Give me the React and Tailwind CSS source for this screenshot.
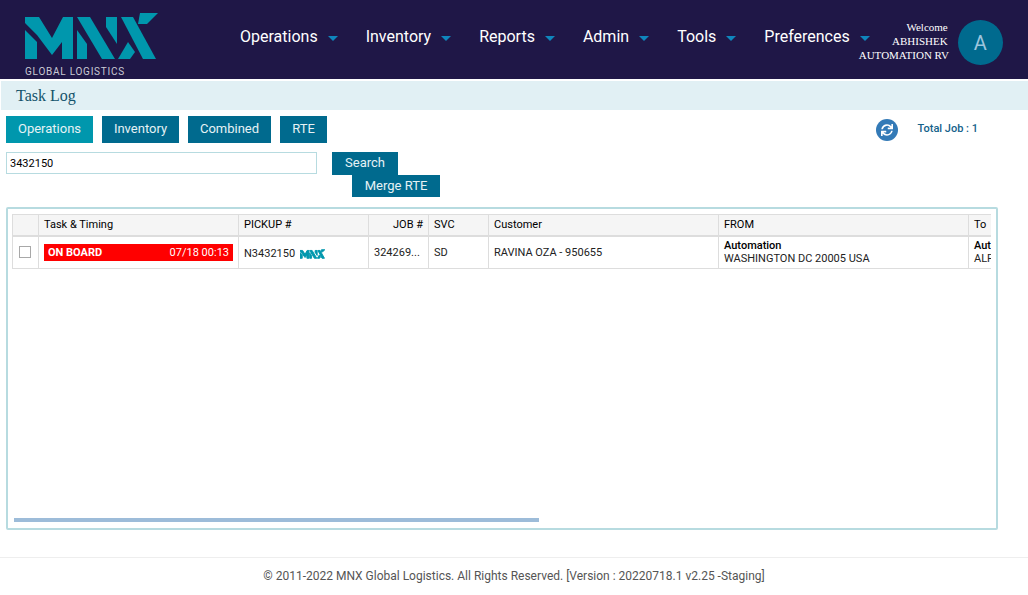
import { FaSync } from 'react-icons/fa';

const navItems = ['Operations', 'Inventory', 'Reports', 'Admin', 'Tools', 'Preferences'];
const tabs = ['Inventory', 'Combined', 'RTE'];

function MnxMark({ className, thick }) {
    return (
        <svg viewBox="0 0 134 46" className={className} fill="#0097ad" stroke={thick ? '#0097ad' : 'none'} strokeWidth={thick ? 5 : 0}>
            <polygon points="0,4 14,4 27,25 38,4 48,4 48,46 37,46 37,29 27,42 12,22 0,10" />
            <polygon points="0,17 12,29 12,46 0,46" />
            <polygon points="52,4 65,4 90,46 77,46" />
            <polygon points="52,17 62,31 62,46 52,46" />
            <polygon points="81,4 92,4 92,31 81,14" />
            <polygon points="96,4 108,4 131,46 118,46" />
            <polygon points="115,0 133,0 122,11 113,11" />
            <polygon points="103,29 110,39 105,46 93,46" />
        </svg>
    );
}

function Header() {
    return (
        <header className="flex h-[79px] items-center bg-[#1f1747] pl-[25px]">
            <div className="w-[215px] self-start pt-[13px]">
                <MnxMark className="h-[46px] w-[134px]" />
                <div className="mt-[7px] text-[10px] leading-[11px] tracking-[0.75px] text-[#c9cad4] font-['Roboto',sans-serif]">GLOBAL LOGISTICS</div>
            </div>
            <nav className="flex gap-[28px] pb-[5px]">
                {navItems.map(item => (
                    <div key={item} className="flex items-center gap-[10px]">
                        <span className="text-base text-white font-['Roboto',sans-serif]">{item}</span>
                        <span className="mt-[2px] h-0 w-0 border-x-[5px] border-t-[5px] border-x-transparent border-t-[#0f86bd]" />
                    </div>
                ))}
            </nav>
            <div className="ml-[-11px] mt-[2px] w-[89px] text-right text-[11px] leading-[14px] text-white font-['Liberation_Serif',serif]">
                <div>Welcome</div>
                <div>ABHISHEK</div>
                <div className="whitespace-nowrap">AUTOMATION RV</div>
            </div>
            <div className="ml-[10px] mt-[6px] flex h-[45px] w-[45px] items-center justify-center rounded-full bg-[#006a8e] text-xl text-[#9ec5dd] font-['Roboto',sans-serif]">A</div>
        </header>
    );
}

function Toolbar() {
    return (
        <>
            <div className="mt-[2px] ml-px h-[29px] bg-[#e1f0f4] pl-[15px] text-base leading-[29px] text-[#14536b] font-['Liberation_Serif',serif]">Task Log</div>
            <div className="mt-[6px] flex h-[27px] pl-[6px] pr-[50px] text-[13px] text-[#e6f2f5]">
                <button className="w-[87px] bg-[#0097ad] pb-[2px]">Operations</button>
                {tabs.map(t => (
                    <button key={t} className={`ml-[9px] bg-[#006a8e] pb-[2px] ${t === 'Inventory' ? 'w-[77px]' : t === 'Combined' ? 'w-[83px]' : 'w-[47px]'}`}>{t}</button>
                ))}
                <div className="ml-auto flex items-center text-[11px] font-medium text-[#14628a]">
                    <span className="flex h-[22px] w-[22px] items-center justify-center rounded-full bg-[#337ab7] text-white"><FaSync size={12} /></span>
                    <span className="ml-[20px] pb-[1px]">Total Job : 1</span>
                </div>
            </div>
            <div className="mt-[9px] flex pl-[6px]">
                <input readOnly value="3432150" className="h-[22px] w-[311px] border border-[#b7dbe0] bg-white px-[3px] text-[11px] text-black outline-none" />
                <div className="ml-[15px] text-[13px] text-[#e6f2f5]">
                    <button className="block h-[23px] w-[66px] bg-[#006a8e] pb-[2px]">Search</button>
                    <button className="ml-[20px] block h-[22px] w-[88px] bg-[#006a8e]">Merge RTE</button>
                </div>
            </div>
        </>
    );
}

function TaskTable() {
    const th = 'border border-[#dddddd] border-b-2 bg-[#f5f5f5] px-[5px] text-left text-[11px] font-normal text-black whitespace-nowrap overflow-hidden';
    const td = 'border border-[#dddddd] px-[5px] text-[11px] text-[#222222] whitespace-nowrap overflow-hidden';
    return (
        <table className="w-[1100px] table-fixed border-collapse">
            <colgroup>
                <col className="w-[26px]" />
                <col className="w-[200px]" />
                <col className="w-[130px]" />
                <col className="w-[60px]" />
                <col className="w-[60px]" />
                <col className="w-[230px]" />
                <col className="w-[250px]" />
                <col className="w-[144px]" />
            </colgroup>
            <thead>
                <tr className="h-[21px]">
                    <th className={th}></th>
                    <th className={th}>Task &amp; Timing</th>
                    <th className={th}>PICKUP #</th>
                    <th className={`${th} text-right`}>JOB #</th>
                    <th className={th}>SVC</th>
                    <th className={th}>Customer</th>
                    <th className={th}>FROM</th>
                    <th className={th}>To</th>
                </tr>
            </thead>
            <tbody>
                <tr className="h-[33px]">
                    <td className={td}>
                        <div className="ml-px h-[12px] w-[12px] border border-[#a8a8a8] bg-white" />
                    </td>
                    <td className={`${td} pt-px`}>
                        <div className="flex h-[17px] items-center justify-between bg-[#ff0000] px-[4px] text-white">
                            <span className="font-bold">ON BOARD</span>
                            <span>07/18 00:13</span>
                        </div>
                    </td>
                    <td className={td}>
                        <div className="flex items-center gap-[5px] pt-[3px] text-[#222]">
                            <span>N3432150</span>
                            <MnxMark className="h-[10px] w-[25px]" thick />
                        </div>
                    </td>
                    <td className={`${td} pt-px`}>324269...</td>
                    <td className={`${td} pt-px`}>SD</td>
                    <td className={`${td} pt-px`}>RAVINA OZA - 950655</td>
                    <td className={`${td} leading-[13px]`}>
                        <div className="font-medium text-black">Automation</div>
                        <div>WASHINGTON DC 20005 USA</div>
                    </td>
                    <td className={`${td} leading-[13px]`}>
                        <div className="font-medium text-black">Automation</div>
                        <div>ALPHARETTA GA</div>
                    </td>
                </tr>
            </tbody>
        </table>
    );
}

export default function App() {
    return (
        <div className="h-[595px] w-[1028px] overflow-hidden bg-white font-['Roboto',sans-serif]">
            <Header />
            <Toolbar />
            <div className="mt-[10px] ml-[6px] flex h-[323px] w-[992px] flex-col rounded-[2px] border-2 border-[#b7dbe0] pl-[4px] pt-[5px]">
                <div className="h-[304px] w-[979px] overflow-hidden">
                    <TaskTable />
                </div>
                <div className="ml-[2px] h-[4px] w-[525px] bg-[#9dbcd9]" />
            </div>
            <footer className="mt-[27px] border-t border-[#eeeeee] pt-[10px] text-center text-xs text-[#555555]">
                © 2011-2022 MNX Global Logistics. All Rights Reserved. [Version : 20220718.1 v2.25 -Staging]
            </footer>
        </div>
    );
}
